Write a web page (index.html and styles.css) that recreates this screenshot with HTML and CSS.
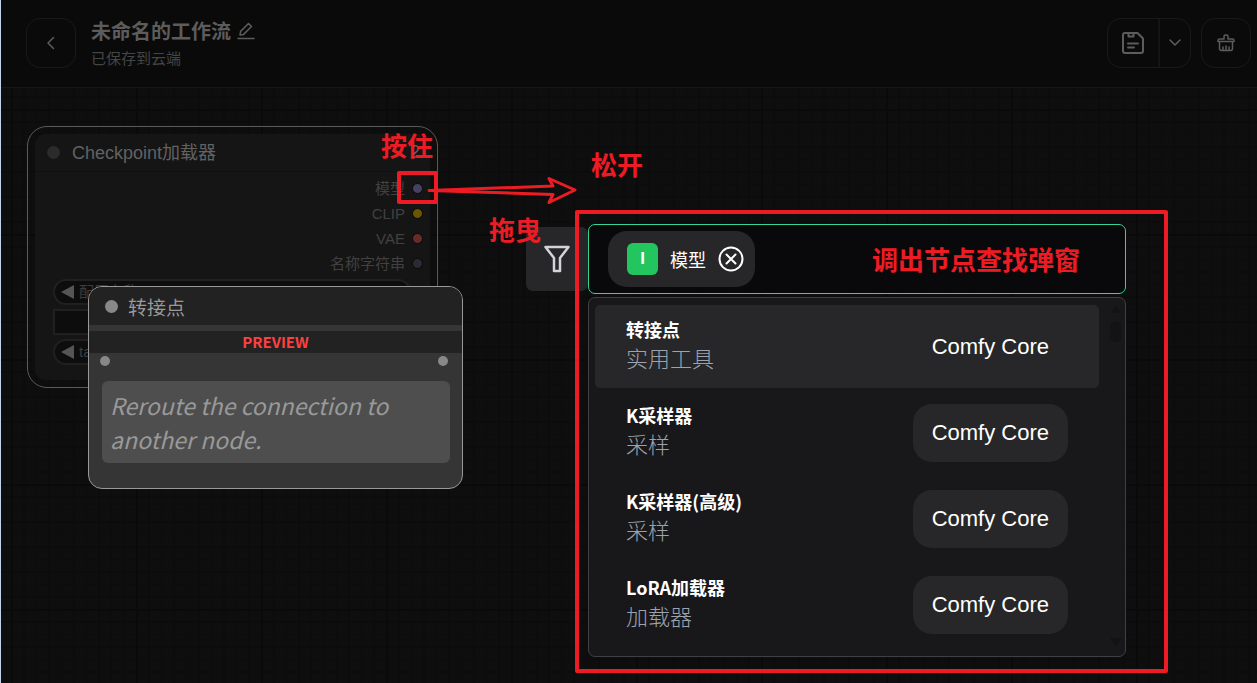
FILE: index.html
```html
<!DOCTYPE html>
<html lang="zh-CN">
<head>
  <meta charset="utf-8">
  <meta name="viewport" content="width=device-width, initial-scale=1">
  <title>未命名的工作流</title>
  <link rel="stylesheet" href="styles.css">
</head>
<body>
  <header class="topbar">
    <button class="icon-btn" type="button" aria-label="返回">
      <svg width="16" height="16" viewBox="0 0 16 16"><path d="M10.5 2.5 5 8l5.500 5.500"/></svg>
    </button>
    <div class="workflow">
      <div class="workflow-name">
        <h1>未命名的工作流</h1>
        <button class="edit-btn" type="button" aria-label="重命名">
          <svg width="18" height="18" viewBox="0 0 18 18"><path d="M1 16.500h16M3 13l.6-3.600L11.500 1.500l3 3L6.600 12.400z"/></svg>
        </button>
      </div>
      <p class="save-state">已保存到云端</p>
    </div>
    <div class="actions">
      <div class="btn-group">
        <button class="save-btn" type="button" aria-label="保存">
          <svg width="22" height="22" viewBox="0 0 22 22"><path d="M3 1h12.500L21 6.500V19a2 2 0 0 1-2 2H3a2 2 0 0 1-2-2V3a2 2 0 0 1 2-2zM6.500 1v3.500h5V1M6 11.500h10M6 15.500h6"/></svg>
        </button>
        <button class="more-btn" type="button" aria-label="更多">
          <svg width="12" height="8" viewBox="0 0 12 8"><path d="m1 1 5 5 5-5"/></svg>
        </button>
      </div>
      <button class="icon-btn" type="button" aria-label="清空">
        <svg width="18" height="18" viewBox="0 0 18 18"><path d="M7 5V2.500a1.500 1.500 0 0 1 1.500-1.500h1A1.500 1.500 0 0 1 11 2.500V5h4.500a1.500 1.500 0 0 1 1.500 1.500V7.500H1V6.500A1.500 1.500 0 0 1 2.500 5zM2.500 7.500V14.500a2 2 0 0 0 2 2h9a2 2 0 0 0 2-2V7.500M6 16v-3M9 16v-4M12 16v-3"/></svg>
      </button>
    </div>
  </header>

  <main class="canvas">
    <!-- selected node -->
    <section class="node">
      <div class="node-inner">
        <div class="node-head">
          <span class="node-dot"></span>
          <h2>Checkpoint加载器</h2>
          <span class="node-id">2</span>
        </div>
        <ul class="slots">
          <li>模型<span class="slot slot-model"></span></li>
          <li>CLIP<span class="slot slot-clip"></span></li>
          <li>VAE<span class="slot slot-vae"></span></li>
          <li>名称字符串<span class="slot slot-name"></span></li>
        </ul>
        <div class="widgets">
          <div class="widget"><span class="arrow-left"></span>配置名称</div>
          <div class="widget widget-box"></div>
          <div class="widget"><span class="arrow-left"></span>tags</div>
        </div>
      </div>
    </section>

    <!-- node preview -->
    <section class="preview">
      <div class="preview-head">
        <span class="preview-dot"></span>
        <h2>转接点</h2>
      </div>
      <div class="preview-label">PREVIEW</div>
      <div class="preview-slots">
        <span></span>
        <span></span>
      </div>
      <p class="preview-text">Reroute the connection to another node.</p>
    </section>

    <!-- node search -->
    <section class="search">
      <button class="filter-btn" type="button" aria-label="筛选">
        <svg width="28" height="28" viewBox="0 0 28 28"><path d="M2.500 2h23L17 13v13h-6V13z"/></svg>
      </button>
      <div class="search-main">
        <div class="search-bar">
          <div class="chip">
            <span class="chip-badge">I</span>
            <span>模型</span>
            <button type="button" aria-label="移除">
              <svg width="26" height="26" viewBox="0 0 26 26"><circle cx="13" cy="13" r="11.500"/><path d="m8.500 8.500 9 9m0-9-9 9"/></svg>
            </button>
          </div>
          <input class="search-input" type="text" aria-label="搜索节点">
        </div>
        <div class="results">
          <ul class="result-list">
            <li class="result active">
              <div class="result-text"><h3>转接点</h3><p>实用工具</p></div>
              <span class="source">Comfy Core</span>
            </li>
            <li class="result">
              <div class="result-text"><h3>K采样器</h3><p>采样</p></div>
              <span class="source">Comfy Core</span>
            </li>
            <li class="result">
              <div class="result-text"><h3>K采样器(高级)</h3><p>采样</p></div>
              <span class="source">Comfy Core</span>
            </li>
            <li class="result">
              <div class="result-text"><h3>LoRA加载器</h3><p>加载器</p></div>
              <span class="source">Comfy Core</span>
            </li>
          </ul>
          <div class="scrollbar">
            <span class="scroll-up"></span>
            <span class="scroll-thumb"></span>
            <span class="scroll-down"></span>
          </div>
        </div>
      </div>
    </section>

    <!-- red hints -->
    <div class="hint-box hint-box-slot"></div>
    <div class="hint-box hint-box-search"></div>
    <svg class="hint-arrow" width="156" height="32" viewBox="0 0 156 32"><path d="M4 15.500 128 11 124 3.500 150 15 124 27.500 128 19.500z"/></svg>
    <span class="hint hint-press">按住</span>
    <span class="hint hint-drag">拖曳</span>
    <span class="hint hint-release">松开</span>
    <span class="hint hint-result">调出节点查找弹窗</span>
  </main>
</body>
</html>
```
FILE: styles.css
```css
:root {
  --sans: "Liberation Sans", "Noto Sans CJK SC", sans-serif;
  --cjk: "Noto Sans CJK SC", sans-serif;
  --topbar: #0a0a0a;
  --line: #191919;
  --red: #ed1c24;
}

* {
  box-sizing: border-box;
}

body {
  margin: 0;
  min-height: 100vh;
  display: flex;
  flex-direction: column;
  border-left: 1px solid #c5d3e8;
  background: var(--topbar);
  font-family: var(--sans);
  overflow: hidden;
}

h1, h2, h3, p, ul {
  margin: 0;
  padding: 0;
  list-style: none;
}

button {
  padding: 0;
  border: none;
  background: none;
  color: inherit;
  display: flex;
  align-items: center;
  justify-content: center;
  cursor: pointer;
}

svg {
  fill: none;
  stroke: currentColor;
  stroke-linecap: round;
  stroke-linejoin: round;
}

/* top bar */
.topbar {
  display: flex;
  align-items: flex-start;
  padding: 18px 6px 15px 25px;
  border-bottom: 1px solid #161616;
  background: var(--topbar);
  color: #5c5c5c;
}

.topbar svg {
  stroke-width: 1.5;
}

.icon-btn {
  width: 50px;
  height: 50px;
  border: 1px solid var(--line);
  border-radius: 14px;
}

.workflow {
  margin-left: 15px;
  font-family: var(--cjk);
}

.workflow-name {
  display: flex;
  align-items: center;
  gap: 6px;
}

.workflow h1 {
  font-size: 20px;
  line-height: 26px;
  font-weight: 700;
}

.save-state {
  font-size: 15px;
  line-height: 28px;
  color: #454545;
}

.actions {
  display: flex;
  gap: 10px;
  margin-left: auto;
}

.btn-group {
  display: flex;
  height: 50px;
  border: 1px solid var(--line);
  border-radius: 14px;
}

.save-btn {
  width: 50px;
}

.topbar .save-btn svg {
  stroke-width: 2;
}

.more-btn {
  width: 32px;
  border-left: 2px solid #141414;
}

/* canvas */
.canvas {
  position: relative;
  flex: 1;
  background-color: #0e0e0e;
  background-image:
    linear-gradient(to right, #0a0a0a 2px, transparent 2px),
    linear-gradient(to bottom, #0a0a0a 2px, transparent 2px),
    repeating-linear-gradient(to right, #0c0c0c 0 1px, transparent 1px 12.5px),
    repeating-linear-gradient(to bottom, #0c0c0c 0 1px, transparent 1px 12.5px);
  background-size: 125px 125px;
  background-position: 10px 21px;
}

/* node */
.node {
  position: absolute;
  left: 26px;
  top: 38px;
  width: 411px;
  padding: 7px;
  border: 1px solid #5a5a5a;
  border-radius: 20px;
}

.node-inner {
  padding-bottom: 15px;
  border-radius: 10px;
  background: #151515;
}

.node-head {
  display: flex;
  align-items: center;
  height: 38px;
  padding: 0 10px 0 12px;
  border-bottom: 1px solid #101010;
  color: #626262;
}

.node-dot {
  width: 13px;
  height: 13px;
  border-radius: 50%;
  background: #2b2b2b;
}

.node-head h2 {
  margin-left: 12px;
  padding-bottom: 3px;
  font-size: 18px;
  font-weight: 400;
}

.node-id {
  margin-left: auto;
  font-size: 18px;
}

.slots {
  padding: 4px 7px 0 0;
  font-size: 15px;
  line-height: 25px;
  color: #414141;
}

.slots li {
  display: flex;
  align-items: center;
  justify-content: flex-end;
  gap: 7px;
}

.slot {
  width: 11px;
  height: 11px;
  border: 1px solid #080808;
  border-radius: 50%;
}

.slot-model { background: #474161; }
.slot-clip { background: #665700; }
.slot-vae { background: #662c2c; }
.slot-name { background: #2b2b33; }

.widgets {
  display: grid;
  gap: 4px;
  padding: 3px 19px 0 18px;
}

.widget {
  display: flex;
  align-items: center;
  gap: 5px;
  height: 26px;
  padding-left: 6px;
  border: 2px solid #202020;
  border-radius: 13px;
  background: #0d0d0d;
  color: #3d3d3d;
  font-size: 15px;
  line-height: 20px;
}

.widget-box {
  border-radius: 0;
}

.arrow-left {
  border: 7px solid transparent;
  border-left: none;
  border-right: 13px solid #555;
}

/* preview */
.preview {
  position: absolute;
  left: 87px;
  top: 198px;
  width: 375px;
  padding-bottom: 25px;
  border: 1px solid #999;
  border-radius: 14px;
  background: #353535;
  overflow: hidden;
  font-family: var(--cjk);
}

.preview-head {
  display: flex;
  align-items: center;
  gap: 10px;
  height: 38px;
  padding-left: 16px;
  background: #222;
}

.preview-dot {
  width: 13px;
  height: 13px;
  border-radius: 50%;
  background: #888;
}

.preview-head h2 {
  font-size: 19px;
  font-weight: 400;
  color: #999;
}

.preview-label {
  margin-top: 6px;
  background: #222;
  color: #ff4040;
  font-size: 15px;
  line-height: 22px;
  font-weight: 700;
  text-align: center;
}

.preview-slots {
  display: flex;
  justify-content: space-between;
  padding: 3px 14px 0 11px;
}

.preview-slots span {
  width: 10px;
  height: 10px;
  border-radius: 50%;
  background: #888;
}

.preview-text {
  margin: 15px 12px 0 13px;
  padding: 7px 8px;
  border-radius: 6px;
  background: #4e4e4e;
  color: #999;
  font-size: 23px;
  line-height: 34px;
  font-weight: 400;
  font-style: italic;
}

/* search */
.search {
  position: absolute;
  left: 525px;
  top: 136px;
  width: 600px;
  display: flex;
  align-items: flex-start;
}

.filter-btn {
  width: 62px;
  height: 64px;
  margin-top: 3px;
  border-radius: 7px;
  background: #27272a;
  color: #d4d4d8;
}

.filter-btn svg {
  stroke-width: 2.5;
}

.search-main {
  flex: 1;
  display: grid;
  gap: 3px;
}

.search-bar {
  display: flex;
  align-items: center;
  height: 70px;
  padding: 0 19px;
  border: 1px solid #34d399;
  border-radius: 7px;
  background: #09090b;
}

.search-input {
  flex: 1;
  min-width: 0;
  border: none;
  outline: none;
  background: transparent;
  color: #fff;
  font: 22px var(--sans);
}

.chip {
  display: flex;
  align-items: center;
  gap: 12px;
  height: 56px;
  padding: 0 11px 0 19px;
  border-radius: 19px;
  background: #27272a;
  color: #fff;
  font-family: var(--cjk);
  font-size: 18px;
}

.chip svg {
  stroke-width: 2;
}

.chip-badge {
  width: 31px;
  height: 32px;
  border-radius: 6px;
  background: #22c55e;
  font: 700 17px/32px var(--sans);
  text-align: center;
}

.results {
  display: flex;
  justify-content: space-between;
  padding: 7px 4px 10px 6px;
  border: 1px solid #3f3f46;
  border-radius: 7px;
  background: #18181b;
}

.result-list {
  flex: 1;
  display: grid;
  gap: 3px;
  margin-right: 11px;
}

.result {
  display: flex;
  align-items: center;
  justify-content: space-between;
  height: 83px;
  padding: 0 31px;
  border-radius: 5px;
  font-family: var(--cjk);
}

.result.active,
.source {
  background: #27272a;
}

.result-text {
  padding-bottom: 4px;
}

.result h3 {
  color: #fff;
  font-size: 18px;
  line-height: 25px;
  font-weight: 700;
}

.result p {
  color: #9ca3af;
  font-size: 22px;
  line-height: 31px;
  font-weight: 300;
}

.source {
  padding: 0 19px;
  border-radius: 19px;
  color: #fff;
  font: 22px/58px var(--sans);
}

.scrollbar {
  display: flex;
  flex-direction: column;
  align-items: center;
  width: 11px;
}

.scroll-up,
.scroll-down {
  border: 6px solid transparent;
}

.scroll-up {
  border-top: none;
  border-bottom: 8px solid #131316;
}

.scroll-down {
  margin-top: auto;
  border-bottom: none;
  border-top: 8px solid #131316;
}

.scroll-thumb {
  width: 11px;
  height: 21px;
  margin-top: 8px;
  border-radius: 6px;
  background: #131316;
}

/* hints */
.hint-box {
  position: absolute;
  border: 4px solid var(--red);
  border-radius: 2px;
  pointer-events: none;
}

.hint-box-slot {
  left: 396px;
  top: 83px;
  width: 41px;
  height: 33px;
}

.hint-box-search {
  left: 574px;
  top: 122px;
  width: 593px;
  height: 463px;
}

.hint-arrow {
  position: absolute;
  left: 424px;
  top: 87px;
  stroke: var(--red);
  stroke-width: 3;
}

.hint {
  position: absolute;
  color: var(--red);
  font: 700 26px/36px var(--cjk);
  white-space: nowrap;
}

.hint-press { left: 380px; top: 39px; }
.hint-drag { left: 488px; top: 123px; }
.hint-release { left: 590px; top: 58px; }
.hint-result { left: 871px; top: 153px; }
```
